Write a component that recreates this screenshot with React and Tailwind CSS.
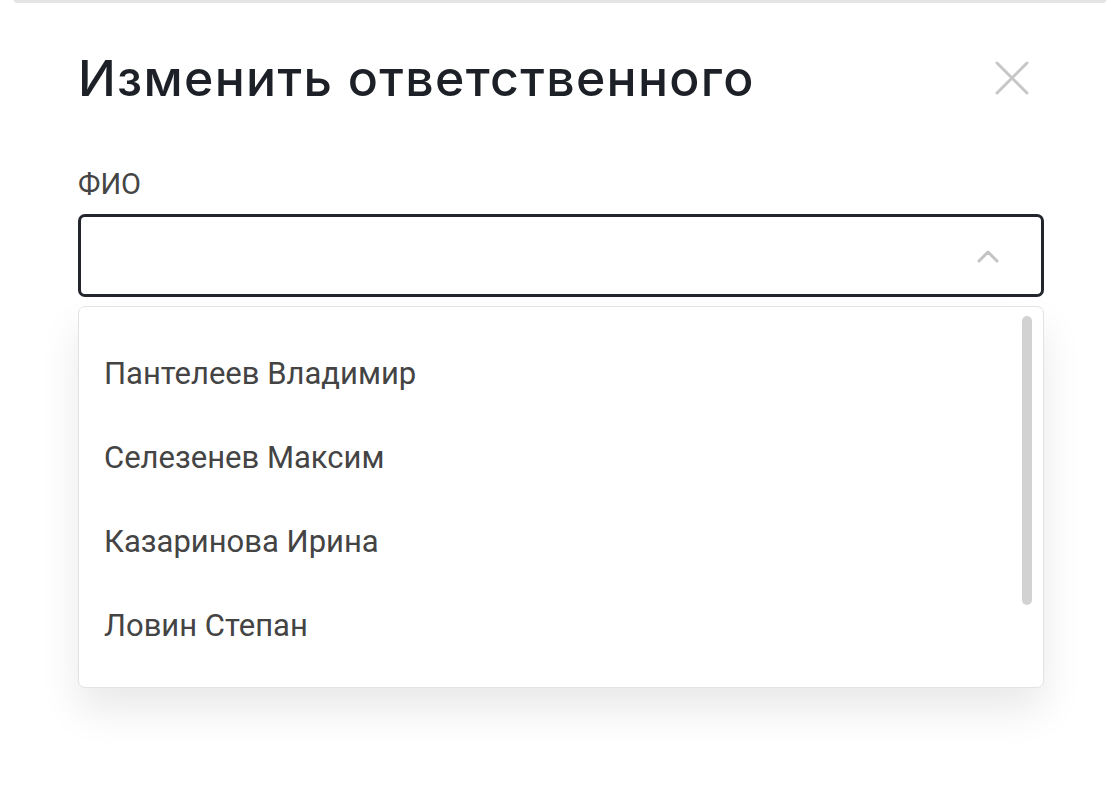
export default function App() {
  const items = ["Пантелеев Владимир", "Селезенев Максим", "Казаринова Ирина", "Ловин Степан"];
  return (
    <div className="w-[1120px] h-[806px] bg-white overflow-hidden">
      <div className="mx-[14px] h-[3px] bg-[#e4e4e4] rounded-b-[3px]" />
      <div className="pl-[78px] pr-[76px] pt-[45px]">
        <div className="flex items-center justify-between h-[60px]">
          <h1 className="text-[50px] leading-[60px] font-medium text-[#1d2127] font-['Inter',sans-serif] tracking-[1.3px]">
            Изменить ответственного
          </h1>
          <svg width="34" height="34" viewBox="0 0 34 34" className="mr-[15px]">
            <path d="M2 2L32 32M32 2L2 32" stroke="#c6c6c6" strokeWidth="3" strokeLinecap="round" />
          </svg>
        </div>
        <div className="mt-[60px] text-[29px] leading-[32px] text-[#454545] font-['Roboto',sans-serif]">ФИО</div>
        <div className="mt-[14px] h-[83px] border-[3px] border-[#22252b] rounded-[7px] flex items-center justify-end pr-[41px]">
          <svg width="24" height="14" viewBox="0 0 24 14">
            <path d="M3 12L12 3L21 12" stroke="#c4c4c4" strokeWidth="3" fill="none" strokeLinecap="round" strokeLinejoin="round" />
          </svg>
        </div>
        <div className="relative mt-[9px] h-[382px] border border-[#e3e3e3] rounded-[7px] bg-white shadow-[0_22px_40px_rgba(0,0,0,0.09)] pt-[25px]">
          {items.map((t) => (
            <div key={t} className="h-[84px] flex items-center pl-[25px] text-[31px] text-[#444444] font-['Roboto',sans-serif]">
              {t}
            </div>
          ))}
          <div className="absolute right-[11px] top-[9px] w-[10px] h-[289px] rounded-full bg-[#d2d2d2]" />
        </div>
      </div>
    </div>
  );
}
